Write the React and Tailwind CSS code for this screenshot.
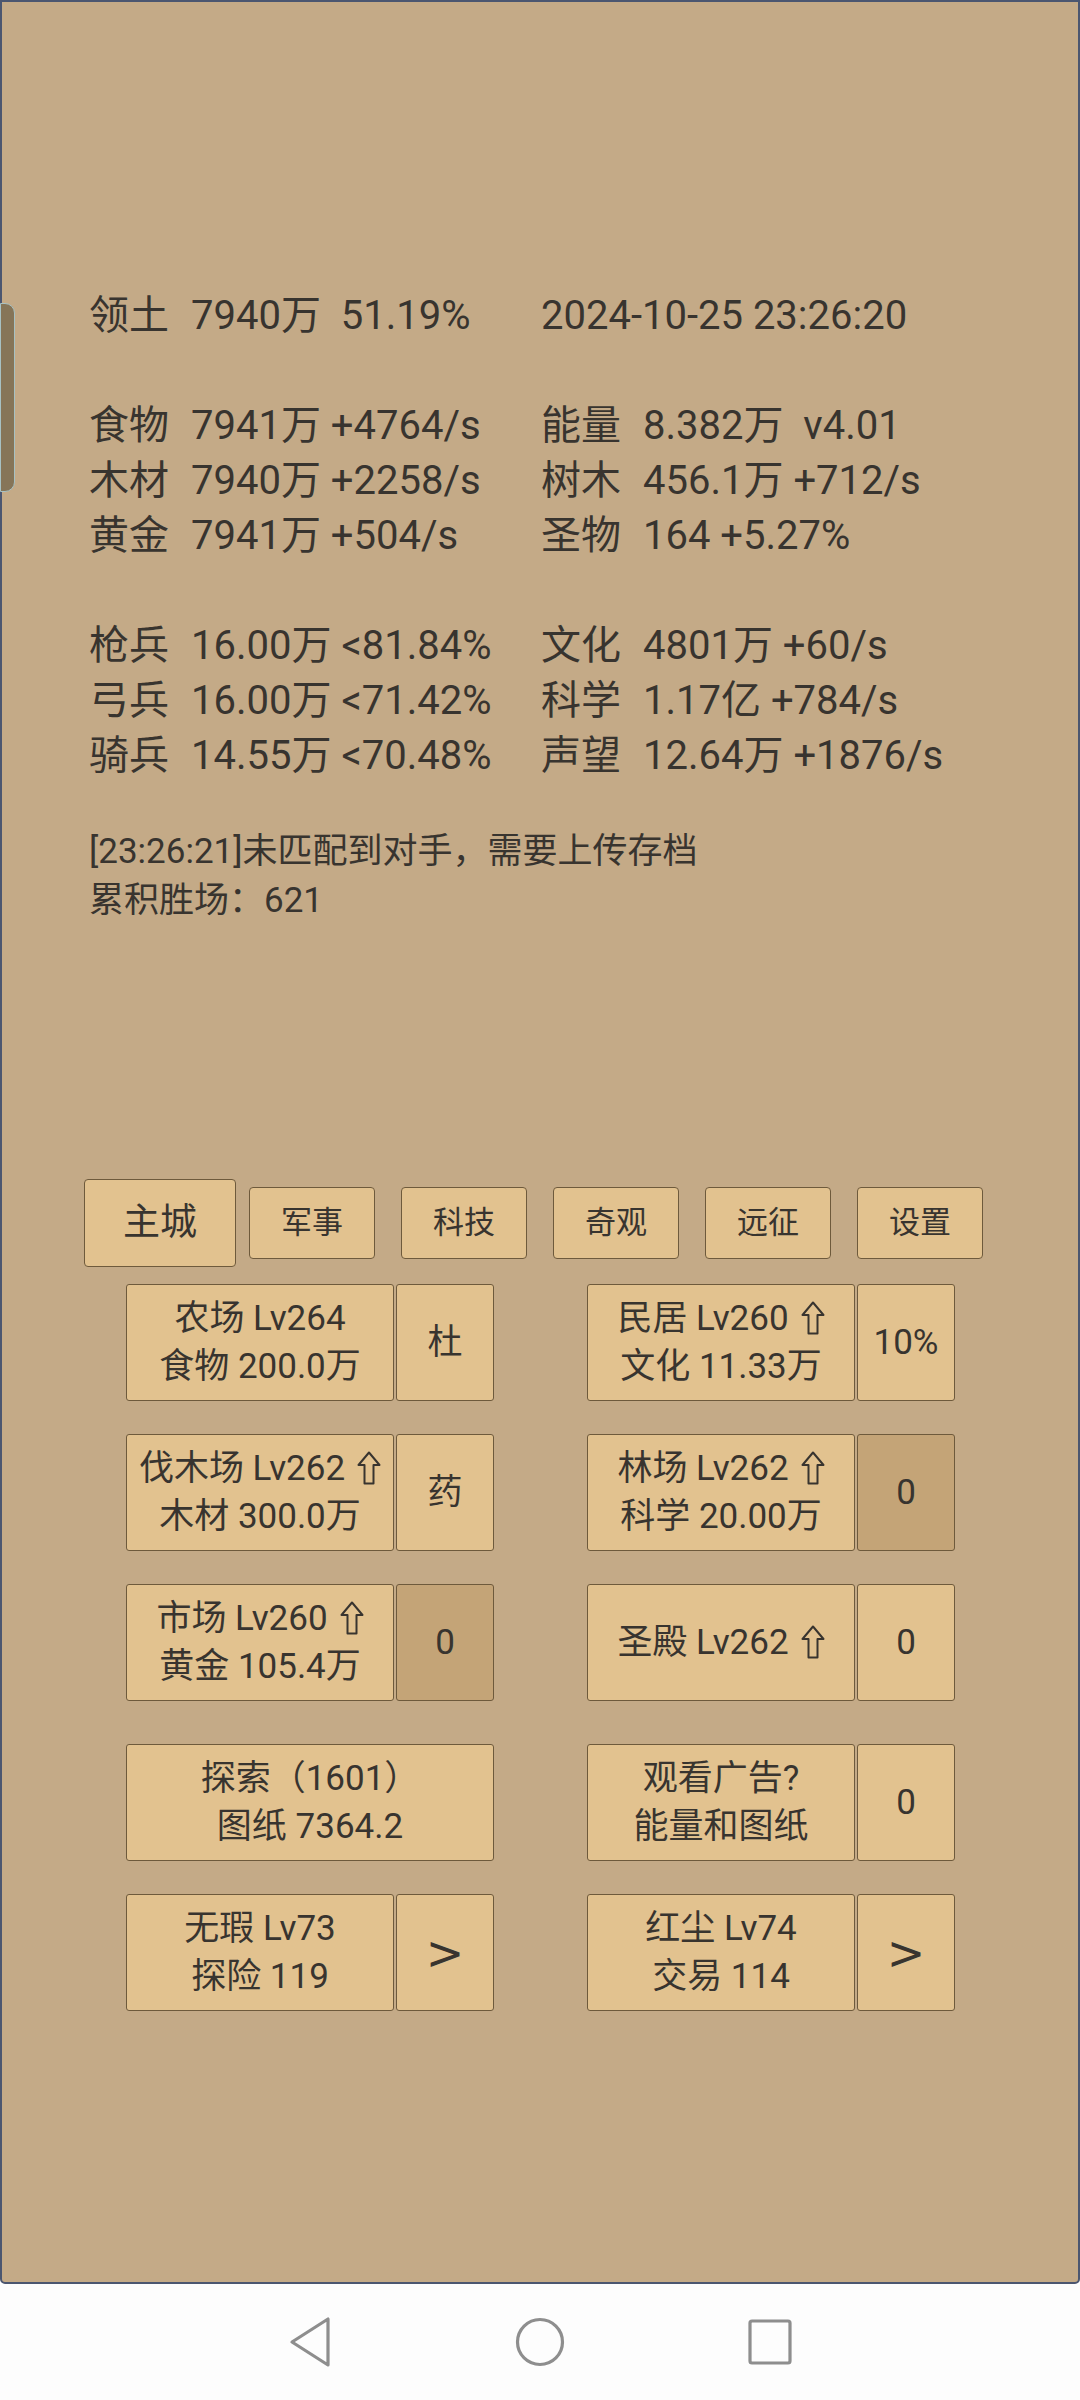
const ink = 'text-[#38342f]';

const statRows = [
  [['领土', '7940万  51.19%'], ['', '2024-10-25 23:26:20']],
  null,
  [['食物', '7941万 +4764/s'], ['能量', '8.382万  v4.01']],
  [['木材', '7940万 +2258/s'], ['树木', '456.1万 +712/s']],
  [['黄金', '7941万 +504/s'], ['圣物', '164 +5.27%']],
  null,
  [['枪兵', '16.00万 <81.84%'], ['文化', '4801万 +60/s']],
  [['弓兵', '16.00万 <71.42%'], ['科学', '1.17亿 +784/s']],
  [['骑兵', '14.55万 <70.48%'], ['声望', '12.64万 +1876/s']],
];

const tabs = ['主城', '军事', '科技', '奇观', '远征', '设置'];

function UpArrow() {
  return (
    <svg width="24" height="34" viewBox="0 0 24 34" className="inline-block ml-[12px] -mt-[5px] align-middle">
      <path d="M12 1.5 L22.5 14 L16.5 14 L16.5 32.5 L7.5 32.5 L7.5 14 L1.5 14 Z" fill="none" stroke="#38342f" strokeWidth="2" strokeLinejoin="round" />
    </svg>
  );
}

function Box({ children, className = '', dark = false }) {
  return (
    <div
      className={`flex flex-col items-center justify-center h-[117px] border border-[#6e5a3c] rounded-[3px] text-[35px] leading-[48px] whitespace-pre ${
        dark ? 'bg-[#c4a477]' : 'bg-[#e2c28f]'
      } ${className}`}
    >
      {children}
    </div>
  );
}

function Pair({ main, side, dark, sideClass = '' }) {
  return (
    <div className="flex gap-[2px] w-[368px]">
      <Box className="w-[268px]">{main}</Box>
      <Box className={`w-[98px] ${sideClass}`} dark={dark}>
        {side}
      </Box>
    </div>
  );
}

export default function App() {
  return (
    <div className={`w-[1080px] h-[2400px] flex flex-col font-['Roboto','Noto_Sans_CJK_SC',sans-serif] ${ink}`}>
      <div className="relative h-[2284px] bg-[#c4aa87] border-2 border-[#4b5670] rounded-b-[5px]">
        {/* side handle */}
        <div className="absolute -left-[2px] top-[301px] w-[15px] h-[189px] bg-[#867558] border border-[#a7c1c3] rounded-r-[10px]" />

        {/* stats */}
        <div className="pt-[286px] pl-[87px] text-[40px] leading-[55px]">
          {statRows.map((row, i) =>
            row ? (
              <div key={i} className="flex h-[55px] whitespace-pre">
                {row.map(([label, value], j) => (
                  <div key={j} className={`flex ${j === 0 ? 'w-[452px]' : ''}`}>
                    {label ? <span className="w-[102px]">{label}</span> : null}
                    <span>{value}</span>
                  </div>
                ))}
              </div>
            ) : (
              <div key={i} className="h-[55px]" />
            )
          )}
        </div>

        {/* log */}
        <div className="mt-[44px] pl-[87px] text-[35px] leading-[49px]">
          <div>[23:26:21]未匹配到对手，需要上传存档</div>
          <div>累积胜场：621</div>
        </div>

        {/* tabs */}
        <div className="mt-[254px] ml-[82px] flex items-center h-[88px]">
          {tabs.map((t, i) => (
            <div key={t} className="w-[152px] flex items-center justify-center">
              {i === 0 ? (
                <div className="w-[152px] h-[88px] flex items-center justify-center bg-[#e2c28f] border border-[#6e5a3c] rounded-[4px] text-[37px]">
                  {t}
                </div>
              ) : (
                <div className="w-[126px] h-[72px] flex items-center justify-center bg-[#e2c28f] border border-[#6e5a3c] rounded-[4px] text-[31px]">
                  {t}
                </div>
              )}
            </div>
          ))}
        </div>

        {/* buildings */}
        <div className="mt-[17px] ml-[124px] flex flex-col">
          <div className="flex gap-[93px]">
            <Pair main={<><span>农场 Lv264</span><span>食物 200.0万</span></>} side="杜" />
            <Pair main={<><span>民居 Lv260<UpArrow /></span><span>文化 11.33万</span></>} side="10%" />
          </div>
          <div className="flex gap-[93px] mt-[33px]">
            <Pair main={<><span>伐木场 Lv262<UpArrow /></span><span>木材 300.0万</span></>} side="药" />
            <Pair main={<><span>林场 Lv262<UpArrow /></span><span>科学 20.00万</span></>} side="0" dark />
          </div>
          <div className="flex gap-[93px] mt-[33px]">
            <Pair main={<><span>市场 Lv260<UpArrow /></span><span>黄金 105.4万</span></>} side="0" dark />
            <Pair main={<span>圣殿 Lv262<UpArrow /></span>} side="0" />
          </div>
          <div className="flex gap-[93px] mt-[43px]">
            <Box className="w-[368px]">
              <span>探索（1601）</span>
              <span>图纸 7364.2</span>
            </Box>
            <Pair main={<><span>观看广告?</span><span>能量和图纸</span></>} side="0" />
          </div>
          <div className="flex gap-[93px] mt-[33px]">
            <Pair
              main={<><span>无瑕 Lv73</span><span>探险 119</span></>}
              side=">"
              sideClass="text-[46px] font-['DejaVu_Sans',sans-serif]"
            />
            <Pair
              main={<><span>红尘 Lv74</span><span>交易 114</span></>}
              side=">"
              sideClass="text-[46px] font-['DejaVu_Sans',sans-serif]"
            />
          </div>
        </div>
      </div>

      {/* nav bar */}
      <div className="h-[116px] bg-[#fdfdfd] flex items-center justify-center">
        <div className="w-[230px] flex justify-center">
          <svg width="46" height="52" viewBox="0 0 46 52">
            <path d="M41 3 L41 49 L5 26 Z" fill="none" stroke="#8e8e8e" strokeWidth="3.2" strokeLinejoin="round" />
          </svg>
        </div>
        <div className="w-[230px] flex justify-center">
          <svg width="52" height="52" viewBox="0 0 52 52">
            <circle cx="26" cy="26" r="22.5" fill="none" stroke="#8e8e8e" strokeWidth="3.2" />
          </svg>
        </div>
        <div className="w-[230px] flex justify-center">
          <svg width="46" height="48" viewBox="0 0 46 48">
            <rect x="3" y="3" width="40" height="42" rx="2" fill="none" stroke="#8e8e8e" strokeWidth="3.2" />
          </svg>
        </div>
      </div>
    </div>
  );
}
